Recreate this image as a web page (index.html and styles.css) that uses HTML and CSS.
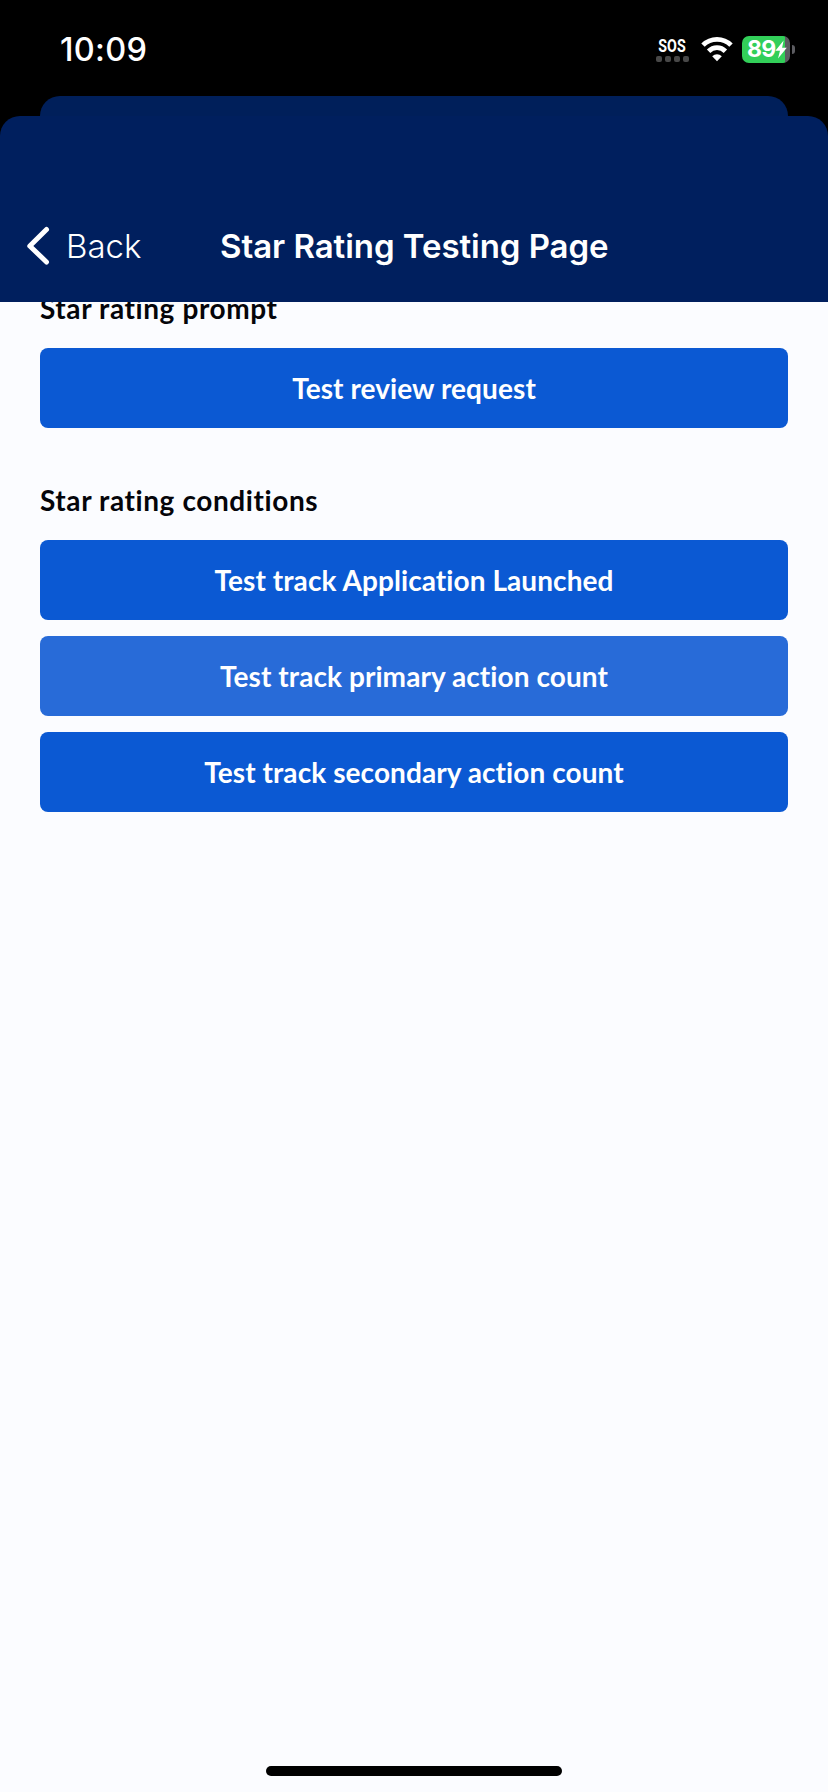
FILE: index.html
```html
<!DOCTYPE html>
<html lang="en">
<head>
<meta charset="utf-8">
<title>Star Rating Testing Page</title>
<link rel="stylesheet" href="styles.css">
</head>
<body>
<div class="screen">
  <div class="status-bar">
    <span class="clock">10:09</span>
    <div class="indicators">
      <div class="cellular">
        <span class="sos">SOS</span>
        <div class="dots"><i></i><i></i><i></i><i></i></div>
      </div>
      <svg class="wifi" width="32" height="26" viewBox="0 0 32 26">
        <path d="M2 9.1 A19.8 19.8 0 0 1 30 9.1" fill="none" stroke="#fff" stroke-width="4.8"/>
        <path d="M7.6 15.2 A11.8 11.8 0 0 1 24.4 15.2" fill="none" stroke="#fff" stroke-width="4.8"/>
        <path d="M16 25.2 L11.2 20.2 A7.2 7.2 0 0 1 20.8 20.2 Z" fill="#fff"/>
      </svg>
      <div class="battery">
        <div class="cell">
          <span class="level">89</span>
          <svg class="bolt" width="12" height="19" viewBox="0 0 12 19"><path d="M8.6 0.5 L0.4 10.8 H5 L3 18.5 L11.8 7.8 H7.1 Z" fill="#fff"/></svg>
        </div>
        <span class="cap"></span>
      </div>
    </div>
  </div>
  <div class="back-sheet"></div>
  <main class="sheet">
    <header class="nav">
      <div class="back">
        <svg width="24" height="40" viewBox="0 0 24 40"><path d="M20.5 3.5 L3.8 20 L20.5 36" fill="none" stroke="#fff" stroke-width="5" stroke-linecap="round" stroke-linejoin="round"/></svg>
        <span class="back-label">Back</span>
      </div>
      <h1 class="title">Star Rating Testing Page</h1>
    </header>
    <div class="content">
      <section class="group">
        <h2 class="heading prompt">Star rating prompt</h2>
        <button class="button">Test review request</button>
      </section>
      <section class="group">
        <h2 class="heading">Star rating conditions</h2>
        <button class="button">Test track Application Launched</button>
        <button class="button pressed">Test track primary action count</button>
        <button class="button">Test track secondary action count</button>
      </section>
    </div>
    <div class="home-indicator"></div>
  </main>
</div>
</body>
</html>
```
FILE: styles.css
```css
* { box-sizing: border-box; }
body { margin: 0; background: #000; }
.screen {
  width: 828px;
  height: 1792px;
  display: flex;
  flex-direction: column;
  overflow: hidden;
  background: #000;
  font-family: Inter, "Liberation Sans", sans-serif;
}
.status-bar {
  height: 96px;
  padding: 0 34px 0 60px;
  display: flex;
  justify-content: space-between;
  color: #fff;
}
.clock {
  padding-top: 30px;
  font-size: 32.5px;
  line-height: 40px;
  font-weight: 500;
  letter-spacing: 0.3px;
}
.indicators { display: flex; padding-top: 36px; }
.cellular {
  width: 34px;
  display: flex;
  flex-direction: column;
  align-items: center;
}
.sos {
  font-family: Roboto, sans-serif;
  font-size: 18.5px;
  line-height: 20px;
  font-weight: 700;
  letter-spacing: 0.2px;
  transform: scaleX(0.77);
}
.dots { display: flex; gap: 3px; }
.dots i { width: 6px; height: 6px; border-radius: 2px; background: #484848; }
.wifi { margin-left: 12px; }
.battery { display: flex; align-items: center; gap: 2px; height: 27px; margin-left: 9px; }
.cell {
  width: 48px;
  height: 27px;
  padding-left: 5px;
  border-radius: 7px;
  display: flex;
  align-items: center;
  background: linear-gradient(90deg, #32cf59 43px, #5c5c61 43px);
}
.level { width: 28px; font-size: 23px; line-height: 27px; font-weight: 700; letter-spacing: -0.8px; }
.bolt { flex: none; }
.cap { width: 3px; height: 9px; margin-right: -1px; border-radius: 0 4px 4px 0; background: #5c5c61; }
.back-sheet {
  flex: none;
  height: 20px;
  margin: 0 40px;
  border-radius: 20px 20px 0 0;
  background: #001f5a;
}
.sheet {
  flex: 1;
  display: flex;
  flex-direction: column;
  background: linear-gradient(#000 30px, #fbfcff 30px);
}
.nav {
  flex: none;
  height: 186px;
  padding: 110px 26px 0;
  display: grid;
  grid-template-columns: 194px 1fr;
  align-items: start;
  border-radius: 20px 20px 0 0;
  background: #001f5e;
  color: #fff;
}
.back { display: flex; height: 40px; }
.back-label {
  margin-left: 16px;
  font-size: 33px;
  line-height: 40px;
  font-weight: 300;
}
.title {
  margin: 0;
  font-size: 33px;
  line-height: 40px;
  font-weight: 600;
  letter-spacing: -0.05px;
  white-space: nowrap;
}
.content {
  flex: 1;
  padding: 0 40px;
  display: flex;
  flex-direction: column;
  gap: 56px;
  overflow: hidden;
}
.group { display: flex; flex-direction: column; gap: 16px; }
.heading, .button {
  font-family: Lato, sans-serif;
  font-size: 28px;
  font-weight: 700;
  font-variant-ligatures: none;
}
.heading {
  margin: 0 0 8px;
  line-height: 32px;
  letter-spacing: 0.6px;
  color: #05050a;
}
/* scrolled partly under the navigation bar */
.heading.prompt { margin-top: -10px; }
.button {
  height: 80px;
  border: 0;
  border-radius: 8px;
  background: #0b59d3;
  color: #fff;
  letter-spacing: 0.08px;
}
.button.pressed { background: #286bd8; }
.home-indicator {
  flex: none;
  align-self: center;
  width: 296px;
  height: 10px;
  margin-bottom: 16px;
  border-radius: 5px;
  background: #000;
}
```
